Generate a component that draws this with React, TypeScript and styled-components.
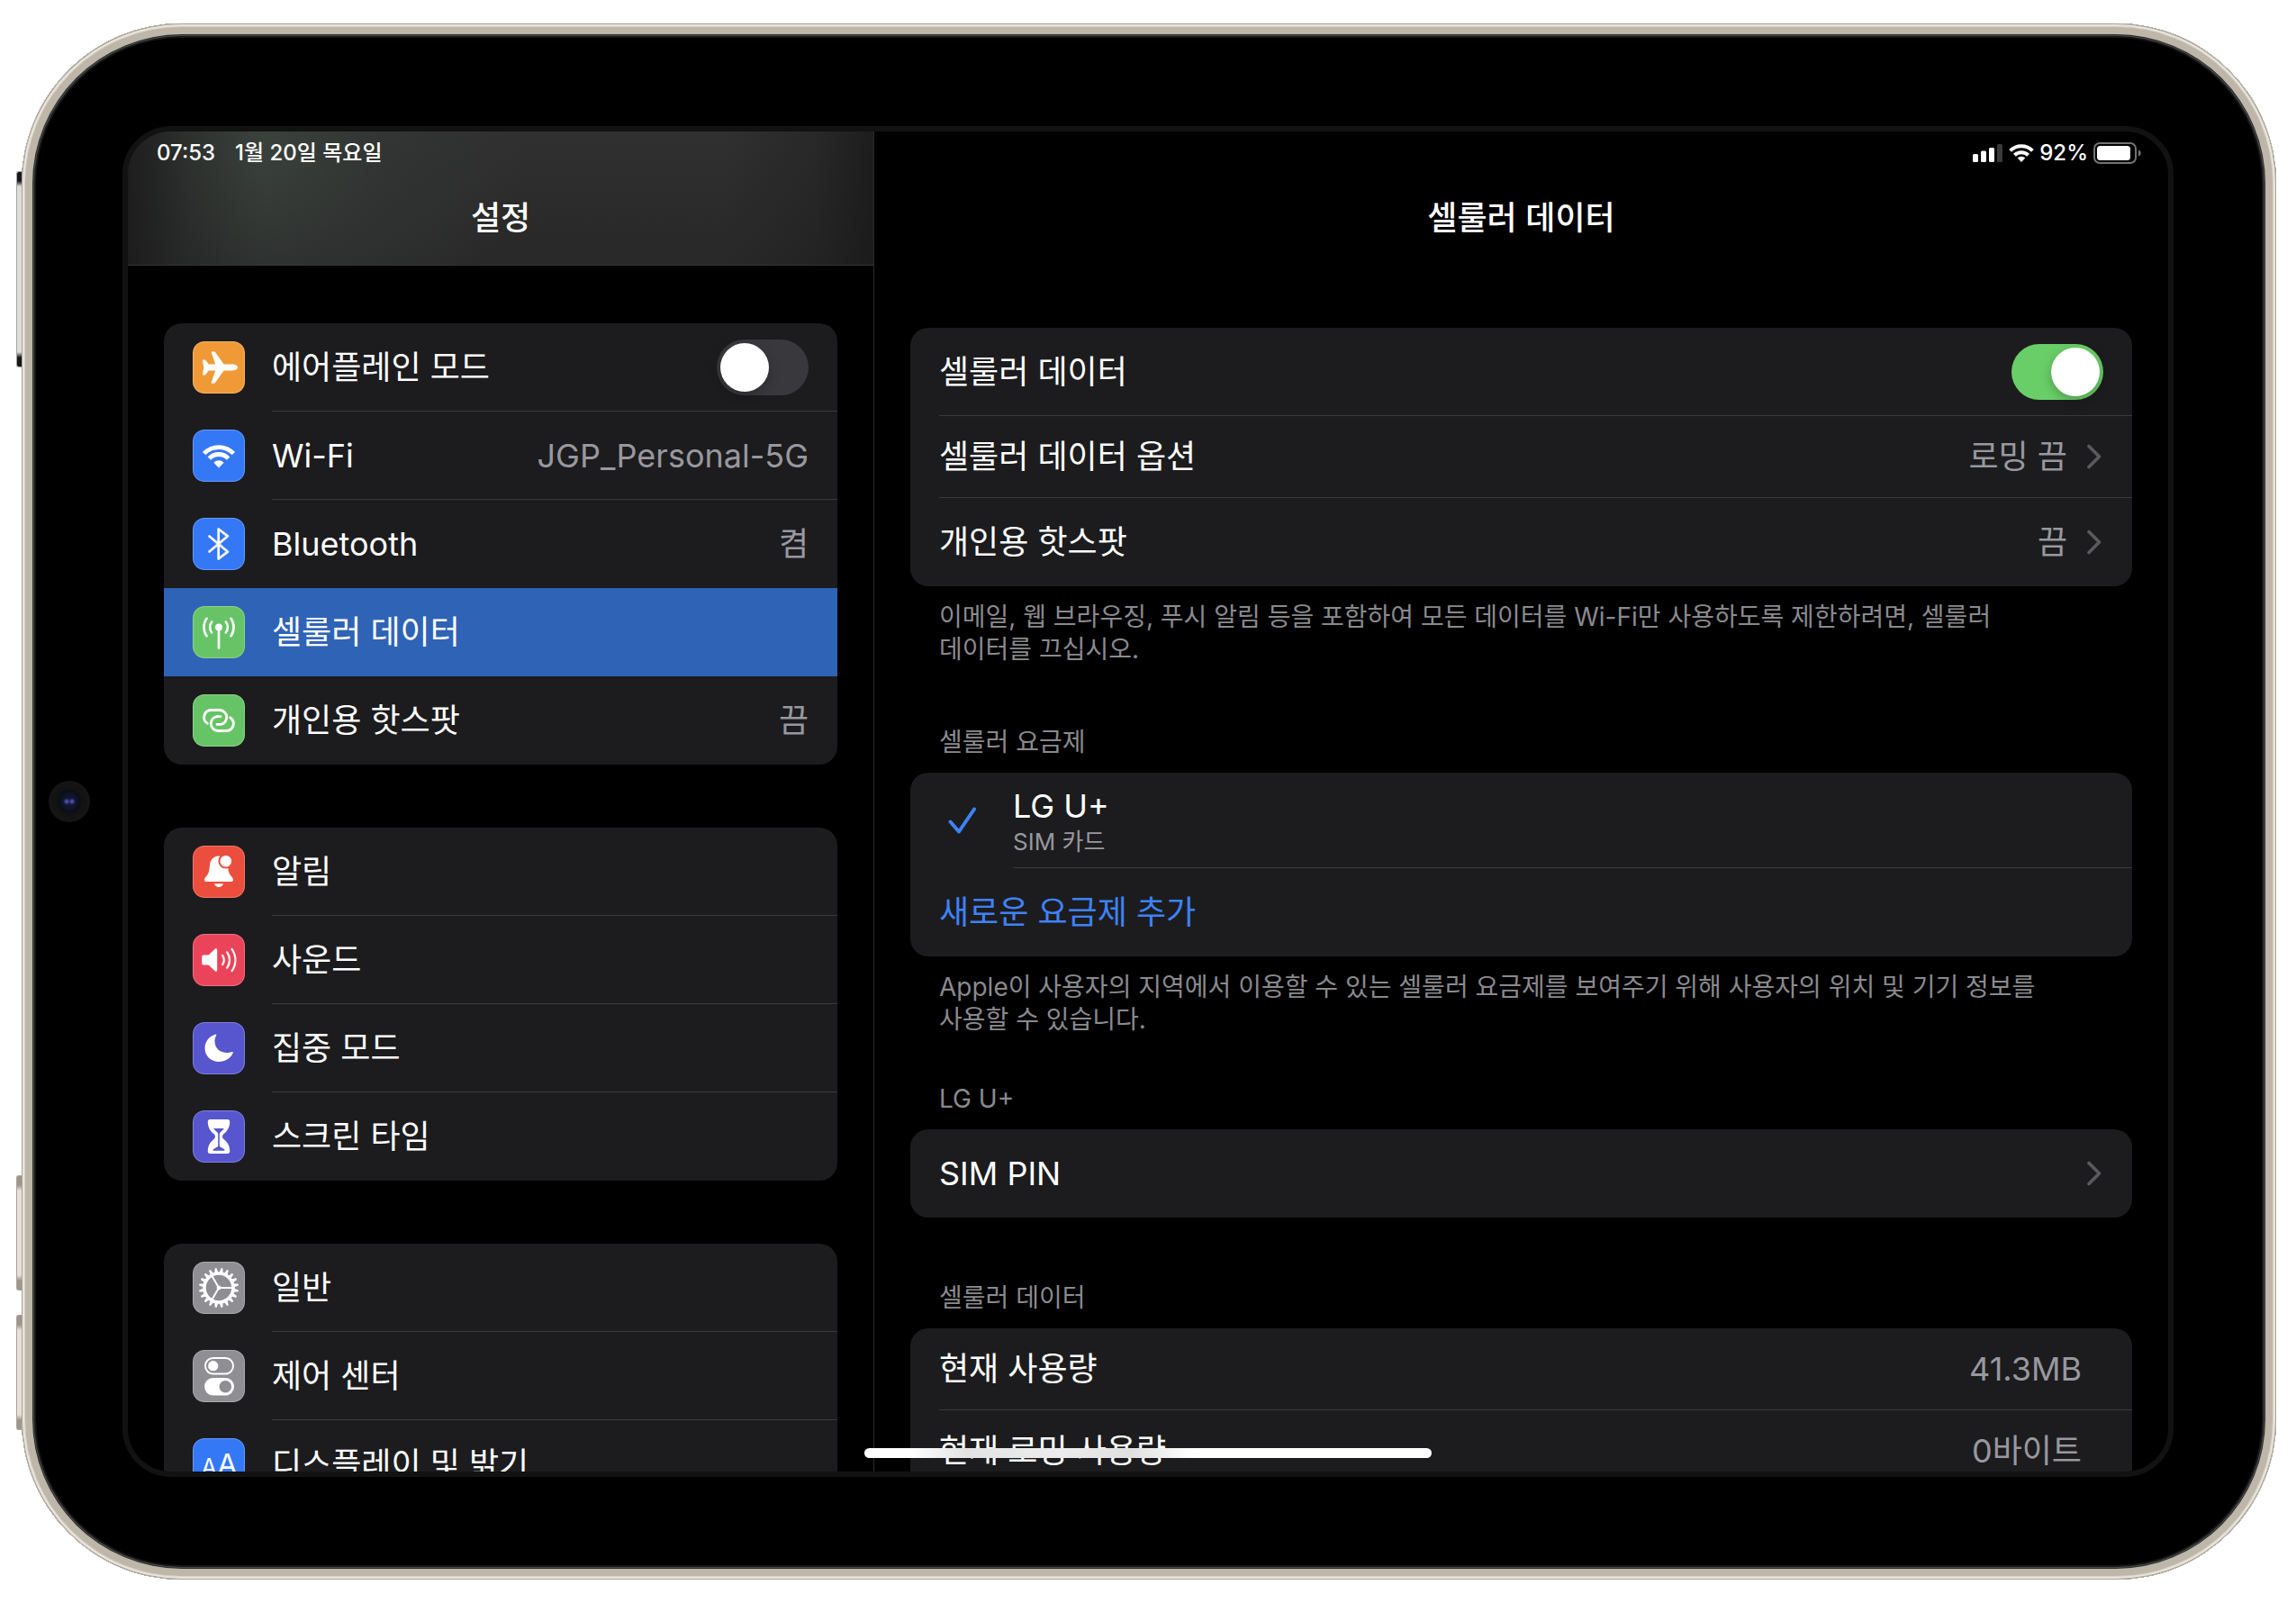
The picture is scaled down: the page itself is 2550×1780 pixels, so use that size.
import React, { useId, useState } from "react";
import styled, { createGlobalStyle, css } from "styled-components";

const color = {
  card: "#1c1c1e",
  line: "#3a3a3c",
  text: "#ffffff",
  value: "#98989f",
  note: "#8a8a8e",
  chevron: "#5a5a5e",
  blue: "#3478f6",
  link: "#3e82f7",
  selected: "#2f63b6",
  green: "#67c466",
  orange: "#f09a37",
  red: "#eb4e3d",
  pink: "#ea445a",
  purple: "#5756ce",
  gray: "#8e8e93",
};

const GlobalStyle = createGlobalStyle`
  *, *::before, *::after { box-sizing: border-box; }
  body {
    margin: 0;
    background: #ffffff;
    color: ${color.text};
    font-family: Inter, "Noto Sans CJK KR", sans-serif;
    font-size: 36px;
    font-weight: 395;
    line-height: 44px;
    word-break: keep-all;
  }
  ul { list-style: none; margin: 0; padding: 0; }
  h1, h2, p { margin: 0; font-weight: inherit; }
`;

/* ---------- device ---------- */

const Page = styled.div`
  display: flex;
  height: 100vh;
  padding: 26px 22px 26px 24px;
`;

const Device = styled.div`
  position: relative;
  display: flex;
  flex: 1;
  min-width: 0;
  padding: 114px 114px 114px 112px;
  border-radius: 178px;
  background: #000000;
  box-shadow:
    inset 0 0 0 1px #a8a195,
    inset 0 0 0 3px #e9e4db,
    inset 0 0 0 4px #d8d2c7,
    inset 0 0 0 12px #bdb6a9,
    inset 0 0 0 13px #2a2b2a,
    inset 0 0 0 14px #4a4d4c,
    inset 0 0 0 16px #161818;
`;

const SideButton = styled.span<{ $top: number; $length: number; $ends: string; $face: string }>`
  position: absolute;
  left: -6px;
  top: ${(p) => p.$top}px;
  width: 6px;
  height: ${(p) => p.$length}px;
  border: 1px solid #a8a39b;
  border-right: 0;
  border-radius: 3px 0 0 3px;
  background: linear-gradient(
    ${(p) => p.$ends} 0,
    ${(p) => p.$ends} 10px,
    ${(p) => p.$face} 16px,
    ${(p) => p.$face} calc(100% - 16px),
    ${(p) => p.$ends} calc(100% - 10px),
    ${(p) => p.$ends} 100%
  );
`;

const Camera = styled.span`
  position: absolute;
  left: 30px;
  top: 50%;
  width: 46px;
  height: 46px;
  margin-top: -23px;
  border-radius: 50%;
  background:
    radial-gradient(circle at 20px 23px, #6a6ab8 0, #34347a 2px, transparent 4px),
    radial-gradient(circle at 26px 23px, #6a6ab8 0, #34347a 2px, transparent 4px),
    radial-gradient(circle, #14183a 0, #10142a 8px, #0b0d16 12px, #121212 14px, #151515 22px);
`;

const Screen = styled.div`
  position: relative;
  display: grid;
  grid-template-columns: minmax(0, 829fr) minmax(0, 1437fr);
  flex: 1;
  min-width: 0;
  overflow: hidden;
  border: 6px solid #121212;
  border-radius: 54px;
  background: #000000;
`;

const HomeBar = styled.span`
  position: absolute;
  left: 50%;
  bottom: 15px;
  width: 630px;
  height: 11px;
  margin-left: -315px;
  border-radius: 6px;
  background: linear-gradient(
    90deg,
    #ffffff 8%,
    #e2e2e2 18%,
    #ececec 34%,
    #e0e0e0 47%,
    #ffffff 58%
  );
`;

/* ---------- panes ---------- */

const Pane = styled.div`
  display: flex;
  flex-direction: column;
  min-width: 0;
  min-height: 0;
  overflow: hidden;
`;

const Sidebar = styled(Pane).attrs({ as: "nav" })`
  border-right: 1px solid #2b2b2d;
`;

const Header = styled.header<{ $tinted?: boolean }>`
  flex: none;
  padding: 0 30px 4px;
  border-bottom: 1px solid transparent;
  ${(p) =>
    p.$tinted &&
    css`
      border-color: #333534;
      background:
        linear-gradient(90deg, rgba(24, 24, 24, 0.8), rgba(24, 24, 24, 0.3) 8%, transparent 18%, transparent 80%, rgba(24, 24, 24, 0.3) 92%, rgba(24, 24, 24, 0.8)),
        radial-gradient(ellipse 300px 320px at 140px 0, #3b423c, rgba(52, 57, 54, 0.6) 45%, transparent),
        linear-gradient(#303030, #282828);
    `}
`;

const StatusBar = styled.div<{ $end?: boolean }>`
  display: flex;
  align-items: center;
  justify-content: ${(p) => (p.$end ? "flex-end" : "flex-start")};
  gap: ${(p) => (p.$end ? 6 : 22)}px;
  height: 48px;
  padding-left: 2px;
  font-size: 24px;
  line-height: 32px;
  font-weight: 500;
`;

const Title = styled.h1`
  font-size: 36px;
  line-height: 96px;
  font-weight: 500;
  text-align: center;
`;

const Body = styled.div<{ $top: number }>`
  flex: none;
  padding: ${(p) => p.$top}px 40px 0;
`;

const Groups = styled.div`
  display: flex;
  flex-direction: column;
  gap: 70px;
`;

/* ---------- lists ---------- */

const Card = styled.ul`
  overflow: hidden;
  border-radius: 20px;
  background: ${color.card};
`;

const rowLayout = css`
  display: flex;
  align-items: stretch;
  width: 100%;
  padding: 0 0 0 32px;
  border: 0;
  background: none;
  color: inherit;
  font: inherit;
  text-align: left;
  text-decoration: none;
`;

const RowLink = styled.a<{ $selected?: boolean }>`
  ${rowLayout}
  gap: 30px;
  background: ${(p) => (p.$selected ? color.selected : "none")};
`;

const RowButton = styled.button`
  ${rowLayout}
`;

const RowLabel = styled.label`
  ${rowLayout}
  gap: 30px;
`;

const RowBox = styled.div`
  ${rowLayout}
`;

const RowContent = styled.span<{ $short?: boolean; $line?: boolean; $end?: number; $accent?: boolean }>`
  display: flex;
  flex: 1;
  align-items: center;
  justify-content: space-between;
  min-width: 0;
  height: ${(p) => (p.$short ? 91 : 98)}px;
  padding-right: ${(p) => p.$end ?? 32}px;
  border-bottom: 1px solid ${(p) => (p.$line ? color.line : "transparent")};
  color: ${(p) => (p.$accent ? color.link : "inherit")};
`;

const Value = styled.span`
  color: ${color.value};
`;

const Trailing = styled.span`
  display: flex;
  align-items: center;
  gap: 22px;
`;

const Tile = styled.svg`
  flex: none;
  align-self: center;
  width: 58px;
  height: 58px;
  overflow: hidden;
  border-radius: 13px;
`;

const Switch = styled.input`
  appearance: none;
  flex: none;
  width: 102px;
  height: 62px;
  margin: 0;
  padding: 4px;
  border-radius: 31px;
  background: #39393d;

  &::before {
    content: "";
    display: block;
    width: 54px;
    height: 54px;
    border-radius: 50%;
    background: #ffffff;
    box-shadow: 0 4px 12px rgba(0, 0, 0, 0.25);
  }
  &:checked {
    background: #69ce67;
  }
  &:checked::before {
    margin-left: 40px;
  }
`;

/* ---------- detail pane ---------- */

const Section = styled.section<{ $space?: number }>`
  margin-top: ${(p) => p.$space ?? 0}px;
`;

const SectionTitle = styled.h2`
  padding: 0 32px 16px;
  color: ${color.note};
  font-size: 28px;
  line-height: 36px;
`;

const Note = styled.p`
  padding: 16px 64px 0 32px;
  color: ${color.note};
  font-size: 28px;
  line-height: 36px;
`;

const PlanText = styled.span`
  display: flex;
  flex: 1;
  flex-direction: column;
  padding: 15px 32px 10px 0;
  border-bottom: 1px solid ${color.line};
`;

const PlanKind = styled.span`
  color: ${color.value};
  font-size: 26px;
  line-height: 36px;
`;

const CheckBoxSlot = styled.span`
  display: flex;
  align-items: center;
  width: 82px;
  padding-left: 10px;
`;

/* ---------- drawings ---------- */

const tint: Record<string, string> = {
  plane: color.orange,
  wifi: color.blue,
  bluetooth: color.blue,
  cellular: color.green,
  hotspot: color.green,
  bell: color.red,
  sound: color.pink,
  moon: color.purple,
  hourglass: color.purple,
  gear: color.gray,
  control: color.gray,
  display: color.blue,
};

const gearTeeth = Array.from({ length: 20 }, (_, i) => i * 18 + 9);

const glyphs: Record<string, React.ReactNode> = {
  plane: (
    <path d="M50 29c0 2-3 3.4-6 3.4H34.6L25 46c-.4.6-.9.8-1.6.8h-1.8c-.8 0-1.1-.6-.8-1.4l4.4-13h-7.4L14.4 37c-.3.4-.7.6-1.2.6h-1.4c-.6 0-.9-.4-.8-1L12.3 29 11 21.400c-.1-.6.2-1 .8-1h1.400c.5 0 .9.2 1.200.6l3.400 4.600h7.400l-4.400-13c-.3-.8 0-1.400.8-1.400h1.800c.7 0 1.200.2 1.600.8l9.600 13.600H44c3 0 6 1.400 6 3.400z" />
  ),
  wifi: (
    <>
      <g fill="none" stroke="#fff" strokeWidth="4.8">
        <path d="M12.600 26.700a22.500 22.500 0 0 1 32.800 0" />
        <path d="M18.400 32.100a14.500 14.500 0 0 1 21.200 0" />
      </g>
      <path d="M29 42.500l-5.600-5.800a7.800 7.800 0 0 1 11.200 0z" />
    </>
  ),
  bluetooth: (
    <path
      d="M18.500 20.500L39 37.700 28.700 45.500V12.500L39 20.300 18.500 37.500"
      fill="none"
      stroke="#fff"
      strokeWidth="2.700"
      strokeLinejoin="round"
      strokeLinecap="round"
    />
  ),
  cellular: (
    <>
      <circle cx="29" cy="23.500" r="3.900" />
      <g fill="none" stroke="#fff" strokeWidth="2.600" strokeLinecap="round">
        <path d="M29 24v22.500" />
        <path d="M15.500 13.800a17 17 0 0 0 0 19.400M42.500 13.800a17 17 0 0 1 0 19.400" />
        <path d="M21.200 17.500a10 10 0 0 0 0 12M36.800 17.500a10 10 0 0 1 0 12" />
      </g>
    </>
  ),
  hotspot: (
    <g fill="none" stroke="#fff" strokeWidth="2.800" strokeLinecap="round">
      <path d="M16.300 32.200A8 8 0 0 1 20.500 17.500H30a8 8 0 0 1 1 15.900h-4" />
      <path d="M41.700 25.800A8 8 0 0 1 37.500 40.500H28a8 8 0 0 1-1-15.900h4" />
    </g>
  ),
  bell: (
    <>
      <path d="M29 11.500c-5.800 0-9.600 4.300-10.100 10.700-.4 6.300-1.200 8.700-3.800 11.900-1.200 1.500-2.100 2.600-2.100 3.800 0 1.400 1 2.100 2.500 2.100h27c1.500 0 2.500-.7 2.500-2.100 0-1.200-.9-2.300-2.100-3.800-2.600-3.200-3.400-5.600-3.800-11.900C38.600 15.800 34.800 11.500 29 11.500z" />
      <path d="M24 42.300h10c-.6 2.300-2.500 3.900-5 3.900s-4.400-1.600-5-3.900z" />
      <circle cx="36.800" cy="17.200" r="8.400" fill={color.red} />
      <circle cx="36.800" cy="17.200" r="6.300" />
    </>
  ),
  sound: (
    <>
      <path d="M12.500 23.500h5l7.300-6.800c1-.9 2.400-.5 2.400.9v22.800c0 1.400-1.400 1.800-2.400.9l-7.300-6.800h-5c-1.500 0-2.300-.8-2.300-2.300v-6.400c0-1.500.8-2.300 2.300-2.300z" />
      <g fill="none" stroke="#fff" strokeWidth="2.200" strokeLinecap="round">
        <path d="M33 23.800a9 9 0 0 1 0 10.400" />
        <path d="M38.200 20.300a15 15 0 0 1 0 17.400" />
        <path d="M43.500 16.800a21 21 0 0 1 0 24.400" />
      </g>
    </>
  ),
  moon: (
    <path d="M25.600 13.600c-7.200 2-12.100 8.100-12.100 15.400C13.500 37.500 20.400 44 29 44c7.300 0 13.500-4 15.800-10 .3-.8-.2-1.300-1-1-1.600.7-3.300 1-5.300 1-8.600 0-14-5.300-14-13.300 0-2.200.6-4.300 1.600-5.800.5-.8.200-1.500-.5-1.300z" />
  ),
  hourglass: (
    <>
      <path d="M19.200 10h19.600c1.500 0 2.400.9 2.400 2.400 0 6.800-2.800 10.300-6.400 13.400-2.400 2-2.400 4.400 0 6.400 3.600 3.100 6.400 6.600 6.400 13.400 0 1.500-.9 2.400-2.400 2.400H19.200c-1.500 0-2.400-.9-2.400-2.400 0-6.800 2.800-10.300 6.400-13.400 2.400-2 2.400-4.400 0-6.400-3.600-3.100-6.400-6.600-6.400-13.400 0-1.500.9-2.400 2.400-2.400z" />
      <path
        d="M24 20h10c.6 0 .7.500.3 1l-3.800 3.600c-.6.600-.7 1.400-.7 2.400v11.500c0 1.500.6 2 1.700 2.600l3.400 1.800c1 .6.800 1.900-.2 1.900H23.300c-1 0-1.200-1.300-.2-1.900l3.400-1.800c1.100-.6 1.700-1.100 1.700-2.600V27c0-1-.1-1.800-.7-2.400L23.700 21c-.4-.5-.3-1 .3-1z"
        fill={color.purple}
      />
    </>
  ),
  gear: (
    <>
      {gearTeeth.map((a) => (
        <path key={a} d="M27 12.500l1-5.500h2l1 5.500z" transform={`rotate(${a} 29 29)`} />
      ))}
      <circle cx="29" cy="29" r="16" fill="none" stroke="#fff" strokeWidth="3.600" />
      <g fill="none" stroke="#fff" strokeWidth="2">
        <path d="M29 29h15M29 29l-7.500-13M29 29l-7.500 13" />
      </g>
      <circle cx="29" cy="29" r="2.400" />
    </>
  ),
  control: (
    <>
      <rect x="14" y="9" width="31" height="17.500" rx="8.700" fill="none" stroke="#fff" strokeWidth="2" />
      <circle cx="22.700" cy="17.700" r="5.600" />
      <rect x="13" y="31" width="33" height="19.500" rx="9.700" />
      <circle cx="36.300" cy="40.700" r="6.800" fill={color.gray} />
    </>
  ),
  display: (
    <g fontFamily="Inter, sans-serif" fontWeight="400" textAnchor="middle">
      <text x="18" y="41" fontSize="25">
        A
      </text>
      <text x="38.500" y="41" fontSize="33">
        A
      </text>
    </g>
  ),
};

function Icon({ name }: { name: string }) {
  return (
    <Tile viewBox="0 0 58 58" fill="#fff" aria-hidden="true">
      <rect width="58" height="58" fill={tint[name]} />
      {glyphs[name]}
      <rect x=".5" y=".5" width="57" height="57" rx="12.500" fill="none" stroke="#fff" strokeOpacity=".25" />
    </Tile>
  );
}

function Chevron() {
  return (
    <svg width="16" height="28" viewBox="0 0 16 28" aria-hidden="true">
      <path
        d="M2 2.500L13.500 14 2 25.500"
        fill="none"
        stroke={color.chevron}
        strokeWidth="3.600"
        strokeLinecap="round"
        strokeLinejoin="round"
      />
    </svg>
  );
}

function Check() {
  return (
    <svg width="32" height="30" viewBox="0 0 32 30" aria-hidden="true">
      <path
        d="M2.500 16.500l9.500 11L29 2.500"
        fill="none"
        stroke={color.link}
        strokeWidth="4"
        strokeLinecap="round"
        strokeLinejoin="round"
      />
    </svg>
  );
}

function Signal() {
  return (
    <svg width="34" height="20" viewBox="0 0 34 20" aria-hidden="true" fill="#fff">
      <rect x="0" y="11" width="6" height="9" rx="1.500" />
      <rect x="9" y="7.500" width="6" height="12.500" rx="1.500" />
      <rect x="18" y="4" width="6" height="16" rx="1.500" />
      <rect x="27" y="0" width="6" height="20" rx="1.500" fill="#3a3a3a" />
    </svg>
  );
}

function StatusWifi() {
  return (
    <svg width="28" height="20" viewBox="0 0 28 20" aria-hidden="true">
      <g fill="none" stroke="#fff" strokeWidth="4">
        <path d="M1.600 7.400a17.800 17.800 0 0 1 24.800 0" />
        <path d="M6.400 12.300a11 11 0 0 1 15.200 0" />
      </g>
      <path d="M14 20l-4.300-4.400a6.200 6.200 0 0 1 8.600 0z" fill="#fff" />
    </svg>
  );
}

function Battery() {
  return (
    <svg width="53" height="24" viewBox="0 0 53 24" aria-hidden="true">
      <rect x="1" y="1" width="46" height="22" rx="6" fill="none" stroke="#737373" strokeWidth="2" />
      <rect x="4" y="4" width="37" height="16" rx="3.500" fill="#fff" />
      <path d="M50 8.500c1.700.6 2.700 1.800 2.700 3.500s-1 2.900-2.700 3.500z" fill="#737373" />
    </svg>
  );
}

/* ---------- data ---------- */

type Item = { icon: string; label: string; value?: string; selected?: boolean };

const connections: Item[] = [
  { icon: "wifi", label: "Wi-Fi", value: "JGP_Personal-5G" },
  { icon: "bluetooth", label: "Bluetooth", value: "켬" },
  { icon: "cellular", label: "셀룰러 데이터", selected: true },
  { icon: "hotspot", label: "개인용 핫스팟", value: "끔" },
];

const alerts: Item[] = [
  { icon: "bell", label: "알림" },
  { icon: "sound", label: "사운드" },
  { icon: "moon", label: "집중 모드" },
  { icon: "hourglass", label: "스크린 타임" },
];

const system: Item[] = [
  { icon: "gear", label: "일반" },
  { icon: "control", label: "제어 센터" },
  { icon: "display", label: "디스플레이 및 밝기" },
];

function NavItems({ items }: { items: Item[] }) {
  return (
    <>
      {items.map((item, i) => (
        <li key={item.icon}>
          <RowLink href={`#${item.icon}`} $selected={item.selected} aria-current={item.selected ? "page" : undefined}>
            <Icon name={item.icon} />
            <RowContent $line={i < items.length - 1 && !item.selected && !items[i + 1].selected}>
              <span>{item.label}</span>
              {item.value && <Value>{item.value}</Value>}
            </RowContent>
          </RowLink>
        </li>
      ))}
    </>
  );
}

function SwitchRow({ label, icon, initial }: { label: string; icon?: string; initial: boolean }) {
  const id = useId();
  const [on, setOn] = useState(initial);
  return (
    <li>
      <RowLabel htmlFor={id}>
        {icon && <Icon name={icon} />}
        <RowContent $line>
          <span>{label}</span>
          <Switch id={id} type="checkbox" role="switch" checked={on} onChange={(e) => setOn(e.target.checked)} />
        </RowContent>
      </RowLabel>
    </li>
  );
}

function DisclosureRow({ label, value, short, line }: { label: string; value?: string; short?: boolean; line?: boolean }) {
  return (
    <li>
      <RowButton type="button">
        <RowContent $short={short} $line={line} $end={34}>
          <span>{label}</span>
          <Trailing>
            {value && <Value>{value}</Value>}
            <Chevron />
          </Trailing>
        </RowContent>
      </RowButton>
    </li>
  );
}

function UsageRow({ label, value }: { label: string; value: string }) {
  return (
    <li>
      <RowBox>
        <RowContent $short $line $end={56}>
          <span>{label}</span>
          <Value>{value}</Value>
        </RowContent>
      </RowBox>
    </li>
  );
}

export default function App() {
  return (
    <>
      <GlobalStyle />
      <Page>
        <Device>
          <SideButton $top={164} $length={218} $ends="#14181f" $face="#dcdcdc" />
          <SideButton $top={1279} $length={128} $ends="#9c968b" $face="#e6e1d8" />
          <SideButton $top={1434} $length={128} $ends="#9c968b" $face="#e6e1d8" />
          <Camera />
          <Screen>
            <Sidebar>
              <Header $tinted>
                <StatusBar>
                  <span>07:53</span>
                  <span>1월 20일 목요일</span>
                </StatusBar>
                <Title>설정</Title>
              </Header>
              <Body $top={64}>
                <Groups>
                  <Card>
                    <SwitchRow icon="plane" label="에어플레인 모드" initial={false} />
                    <NavItems items={connections} />
                  </Card>
                  <Card>
                    <NavItems items={alerts} />
                  </Card>
                  <Card>
                    <NavItems items={system} />
                  </Card>
                </Groups>
              </Body>
            </Sidebar>

            <Pane as="main">
              <Header>
                <StatusBar $end>
                  <Signal />
                  <StatusWifi />
                  <span>92%</span>
                  <Battery />
                </StatusBar>
                <Title>셀룰러 데이터</Title>
              </Header>
              <Body $top={69}>
                <Section>
                  <Card>
                    <SwitchRow label="셀룰러 데이터" initial />
                    <DisclosureRow label="셀룰러 데이터 옵션" value="로밍 끔" short line />
                    <DisclosureRow label="개인용 핫스팟" value="끔" />
                  </Card>
                  <Note>
                    이메일, 웹 브라우징, 푸시 알림 등을 포함하여 모든 데이터를 Wi-Fi만 사용하도록 제한하려면, 셀룰러 데이터를
                    끄십시오.
                  </Note>
                </Section>

                <Section $space={67}>
                  <SectionTitle>셀룰러 요금제</SectionTitle>
                  <Card>
                    <li>
                      <RowButton type="button" aria-pressed="true">
                        <CheckBoxSlot>
                          <Check />
                        </CheckBoxSlot>
                        <PlanText>
                          <span>LG U+</span>
                          <PlanKind>SIM 카드</PlanKind>
                        </PlanText>
                      </RowButton>
                    </li>
                    <li>
                      <RowButton type="button">
                        <RowContent $accent>새로운 요금제 추가</RowContent>
                      </RowButton>
                    </li>
                  </Card>
                  <Note>
                    Apple이 사용자의 지역에서 이용할 수 있는 셀룰러 요금제를 보여주기 위해 사용자의 위치 및 기기 정보를
                    사용할 수 있습니다.
                  </Note>
                </Section>

                <Section $space={52}>
                  <SectionTitle>LG U+</SectionTitle>
                  <Card>
                    <DisclosureRow label="SIM PIN" />
                  </Card>
                </Section>

                <Section $space={71}>
                  <SectionTitle>셀룰러 데이터</SectionTitle>
                  <Card>
                    <UsageRow label="현재 사용량" value="41.3MB" />
                    <UsageRow label="현재 로밍 사용량" value="0바이트" />
                  </Card>
                </Section>
              </Body>
            </Pane>
            <HomeBar />
          </Screen>
        </Device>
      </Page>
    </>
  );
}
